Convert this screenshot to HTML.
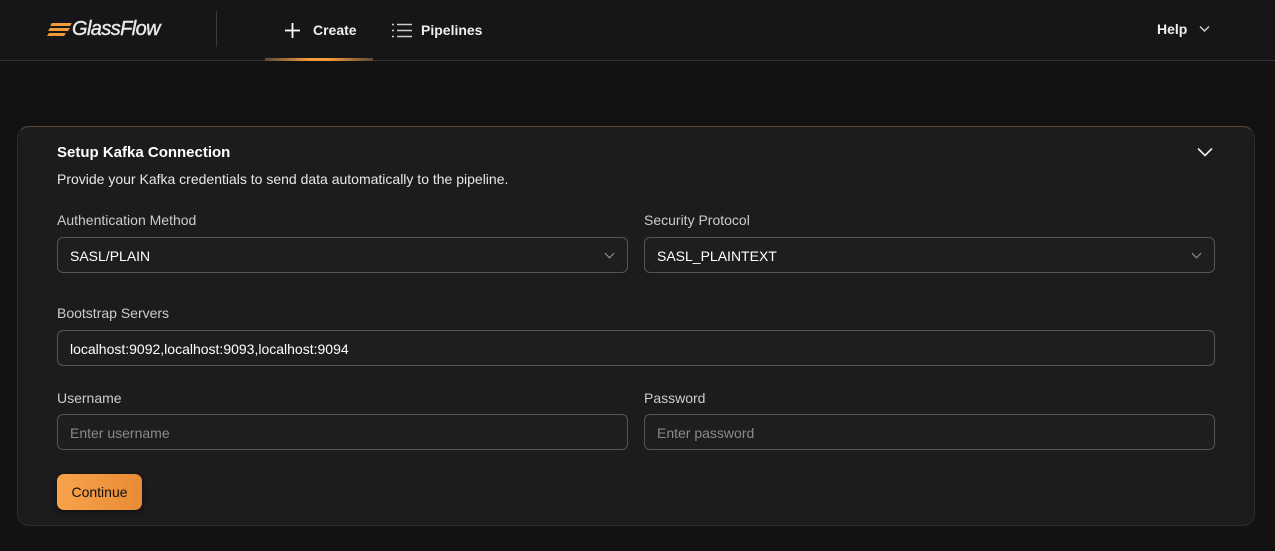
<!DOCTYPE html>
<html><head><meta charset="utf-8"><style>
*{box-sizing:border-box;margin:0;padding:0}
body{width:1275px;height:551px;background:#121213;font-family:"Liberation Sans",Arial,sans-serif;color:#fff;overflow:hidden;position:relative}
.hdr{position:absolute;left:0;top:0;width:1275px;height:61px;background:#161618;border-bottom:1px solid #333}
.logo{position:absolute;left:72px;top:18px;font-size:20px;font-style:italic;font-weight:normal;color:#e8e8e8;letter-spacing:-0.6px;-webkit-text-stroke:0.4px #e8e8e8}
.bars{position:absolute;left:48px;top:23px}
.bars i{display:block;height:3px;background:#f29a3a;margin-bottom:2px;transform:skewX(-30deg)}
.sep{position:absolute;left:216px;top:11px;width:1px;height:36px;background:#3a3a3a}
.nav{position:absolute;top:22px;font-size:14px;font-weight:bold;color:#eee}
.ul{position:absolute;left:265px;top:58px;width:108px;height:3px;background:linear-gradient(90deg,#5a4a3a,#f29a3a 40%,#f29a3a 60%,#5a4a3a)}
.card{position:absolute;left:17px;top:126px;width:1238px;height:400px;background:#1c1c1c;border:1px solid #302c28;border-top-color:#5a4a3a;border-radius:12px}
.t{position:absolute;font-size:14px}
.in{position:absolute;height:36px;border:1px solid #555;border-radius:6px;background:#1e1e1e;font-size:14px;padding:10px 12px 8px;color:#fff}
.ph{color:#8a8a8a}
.chev{position:absolute;right:14px;top:12px;width:7px;height:7px;border-right:1.5px solid #999;border-bottom:1.5px solid #999;transform:rotate(45deg)}
.btn{position:absolute;left:57px;top:474px;width:85px;height:36px;border-radius:7px;background:linear-gradient(90deg,#f7a34b,#e98a35);color:#111;font-size:14px;text-align:center;line-height:36px;box-shadow:0 2px 6px rgba(0,0,0,.5)}
</style></head><body>
<div class="hdr">
 <div class="bars" style="top:23px"><i style="width:20px;margin-left:3px"></i><i style="width:20px;margin-left:1px"></i><i style="width:17px"></i></div>
 <div class="logo">GlassFlow</div>
 <div class="sep"></div>
 <svg style="position:absolute;left:284px;top:22px" width="17" height="17"><path d="M8.5 1V16M1 8.5H16" stroke="#fff" stroke-width="1.8"/></svg>
 <div class="nav" style="left:313px">Create</div>
 <svg style="position:absolute;left:391px;top:23px" width="22" height="15"><path d="M6 1.5H21M6 7.5H21M6 13.5H21" stroke="#ccc" stroke-width="1.5"/><path d="M1 1.5H3M1 7.5H3M1 13.5H3" stroke="#ccc" stroke-width="1.5"/></svg>
 <div class="nav" style="left:421px">Pipelines</div>
 <div class="ul"></div>
 <div class="nav" style="left:1157px;top:21px">Help</div>
 <svg style="position:absolute;left:1199px;top:25px" width="11" height="8"><path d="M1 1.5L5.5 6L10 1.5" stroke="#ccc" stroke-width="1.5" fill="none"/></svg>
</div>
<div class="card"></div>
<div class="t" style="left:57px;top:144px;font-size:15px;font-weight:bold">Setup Kafka Connection</div>
<svg style="position:absolute;left:1197px;top:147px" width="16" height="10"><path d="M1 1.5L8 8.5L15 1.5" stroke="#eee" stroke-width="1.6" fill="none"/></svg>
<div class="t" style="left:57px;top:171px;color:#e8e8e8">Provide your Kafka credentials to send data automatically to the pipeline.</div>
<div class="t" style="left:57px;top:212px;color:#ccc">Authentication Method</div>
<div class="t" style="left:644px;top:212px;color:#ccc">Security Protocol</div>
<div class="in" style="left:57px;top:237px;width:571px">SASL/PLAIN<span class="chev"></span></div>
<div class="in" style="left:644px;top:237px;width:571px">SASL_PLAINTEXT<span class="chev"></span></div>
<div class="t" style="left:57px;top:305px;color:#ccc">Bootstrap Servers</div>
<div class="in" style="left:57px;top:330px;width:1158px">localhost:9092,localhost:9093,localhost:9094</div>
<div class="t" style="left:57px;top:390px;color:#ccc">Username</div>
<div class="t" style="left:644px;top:390px;color:#ccc">Password</div>
<div class="in ph" style="left:57px;top:414px;width:571px">Enter username</div>
<div class="in ph" style="left:644px;top:414px;width:571px">Enter password</div>
<div class="btn">Continue</div>
</body></html>
